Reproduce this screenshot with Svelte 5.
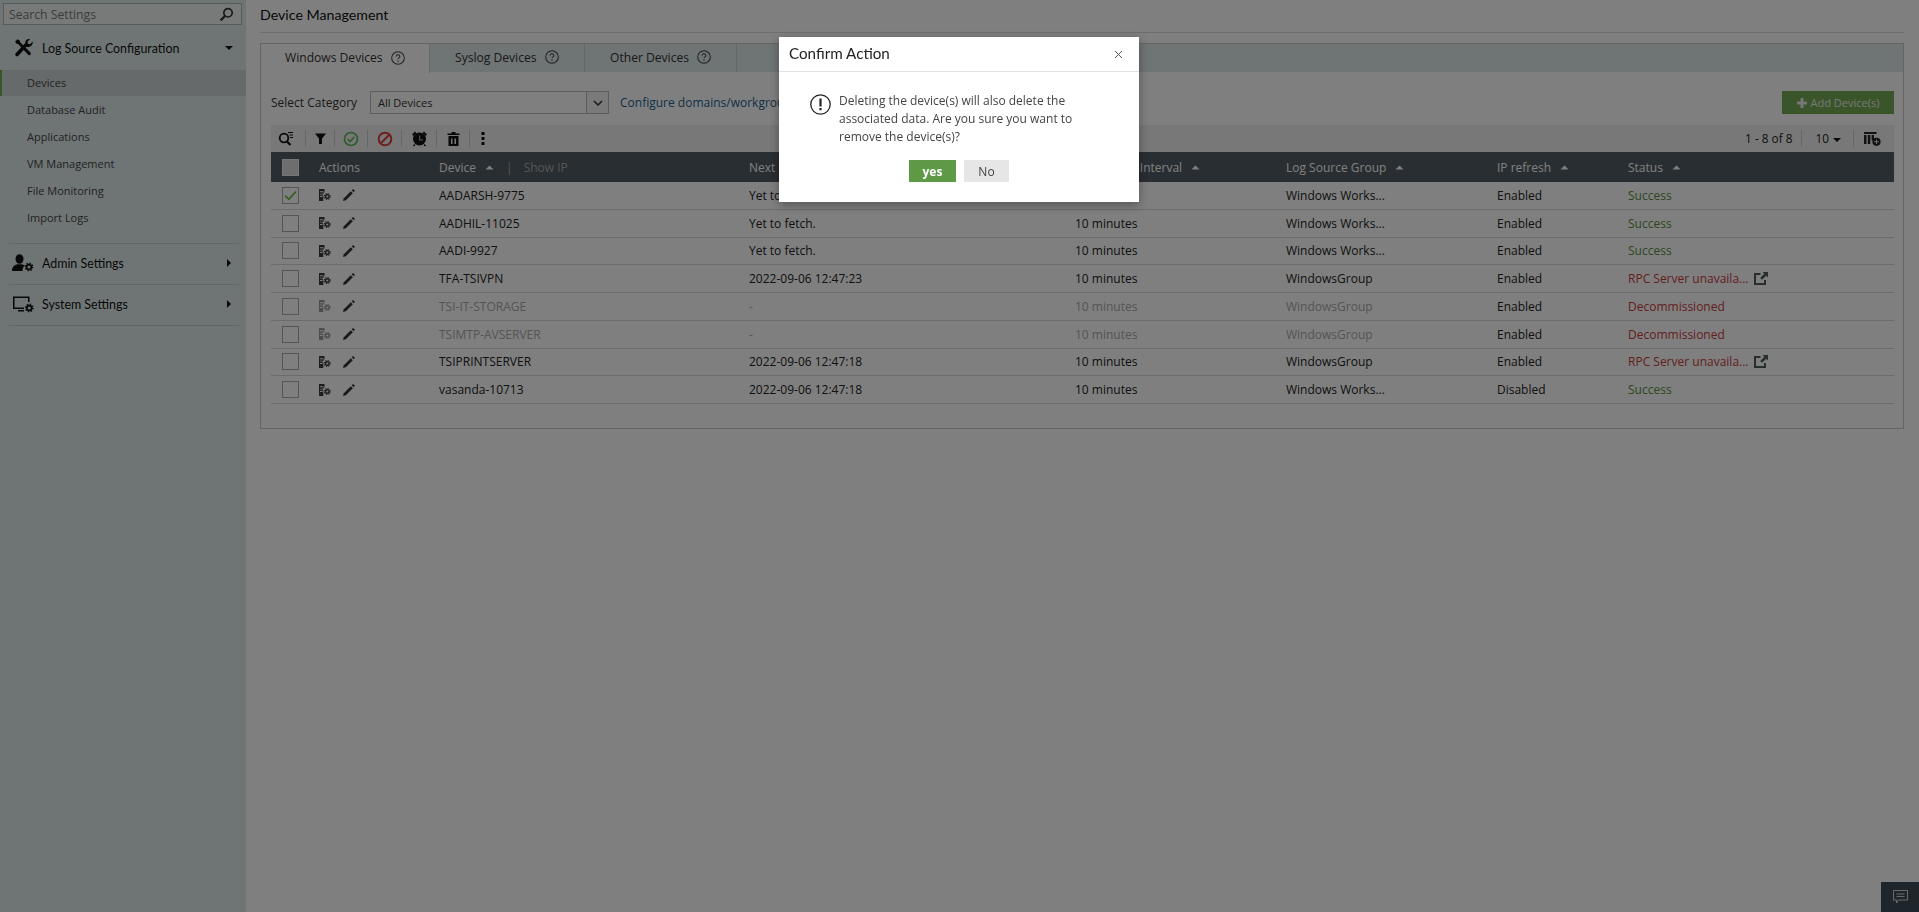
<script lang="ts">
  type Device = {
    name: string;
    next: string;
    group: string;
    refresh: string;
    status: string;
    checked?: boolean;
    off?: boolean;
    link?: boolean;
  };

  const menu = ['Devices', 'Database Audit', 'Applications', 'VM Management', 'File Monitoring', 'Import Logs'];

  const devices: Device[] = [
    { name: 'AADARSH-9775', next: 'Yet to fetch.', group: 'Windows Works...', refresh: 'Enabled', status: 'Success', checked: true },
    { name: 'AADHIL-11025', next: 'Yet to fetch.', group: 'Windows Works...', refresh: 'Enabled', status: 'Success' },
    { name: 'AADI-9927', next: 'Yet to fetch.', group: 'Windows Works...', refresh: 'Enabled', status: 'Success' },
    { name: 'TFA-TSIVPN', next: '2022-09-06 12:47:23', group: 'WindowsGroup', refresh: 'Enabled', status: 'RPC Server unavaila...', link: true },
    { name: 'TSI-IT-STORAGE', next: '-', group: 'WindowsGroup', refresh: 'Enabled', status: 'Decommissioned', off: true },
    { name: 'TSIMTP-AVSERVER', next: '-', group: 'WindowsGroup', refresh: 'Enabled', status: 'Decommissioned', off: true },
    { name: 'TSIPRINTSERVER', next: '2022-09-06 12:47:18', group: 'WindowsGroup', refresh: 'Enabled', status: 'RPC Server unavaila...', link: true },
    { name: 'vasanda-10713', next: '2022-09-06 12:47:18', group: 'Windows Works...', refresh: 'Disabled', status: 'Success' }
  ];

  const statusClass = (s: string) => (s === 'Success' ? 'ok' : 'bad');
</script>

{#snippet sortUp()}
  <svg class="sort" width="9" height="5" viewBox="0 0 9 5"><path d="M0.5 4.5 4.5 0.5 8.5 4.5z" fill="currentColor" /></svg>
{/snippet}

{#snippet help()}
  <svg class="help" width="14" height="14" viewBox="0 0 15 15" fill="none" stroke="#444" stroke-width="1.1">
    <circle cx="7.5" cy="7.5" r="6.8" />
    <path d="M5.5 6c0-1.3 1-2 2-2s2 .7 2 1.8c0 1.5-2 1.5-2 3" />
    <path d="M7.5 10.3v1.3" stroke-width="1.3" />
  </svg>
{/snippet}

{#snippet gear(cx: number, cy: number)}
  <circle {cx} {cy} r="2.4" fill="none" stroke="#111" stroke-width="1.8" />
  <circle {cx} {cy} r="3.7" fill="none" stroke="#111" stroke-width="1.4" stroke-dasharray="1.4 1.5" />
{/snippet}

<div class="page">
  <aside class="side">
    <div class="search">
      <span>Search Settings</span>
      <svg width="15" height="15" viewBox="0 0 15 15" fill="none" stroke="#333" stroke-width="1.7">
        <circle cx="9" cy="5.8" r="4.2" />
        <path d="M6 9 1.6 13.4" stroke-width="2.2" />
      </svg>
    </div>

    <div class="group open">
      <svg class="gicon" width="20" height="20" viewBox="0 0 20 20" fill="#111">
        <path d="M3.4 1.2 1.2 3.4l1 2.2 1.9.4 9.8 10.6a1.6 1.6 0 0 0 2.6-2.2L6.2 4.3 5.7 2.4z" />
        <path d="M18.8 3.4 16 6.2l-2-.4-.5-2 2.7-2.7C13.7.4 11 2 11.3 5L1.7 15.2a1.8 1.8 0 0 0 2.7 2.5L9.7 12l1.6-1.9 1.1-1.3c3 .8 6.7-1.2 6.4-5.4z" />
      </svg>
      <span>Log Source Configuration</span>
      <i class="caret down"></i>
    </div>
    <ul class="menu">
      {#each menu as item, i}
        <li class:active={i === 0}>{item}</li>
      {/each}
    </ul>

    <div class="group line">
      <svg class="gicon" width="22" height="18" viewBox="0 0 22 18" fill="#111">
        <ellipse cx="7.5" cy="5" rx="4" ry="4.8" />
        <path d="M0 17c0-4.5 2.5-6 5.5-6.800h4c1.300.3 2.500.8 3.300 1.500-1.800 1.300-2.600 3.300-2.100 5.300z" />
        {@render gear(17, 13)}
      </svg>
      <span>Admin Settings</span>
      <i class="caret right"></i>
    </div>

    <div class="group line">
      <svg class="gicon" width="22" height="18" viewBox="0 0 22 18" fill="#111">
        <path d="M1 1.500h16.500V7H16V3H2.500v9.500H12V14H1z" />
        <path d="M6 15h6v1.500H6z" />
        {@render gear(17.3, 13)}
      </svg>
      <span>System Settings</span>
      <i class="caret right"></i>
    </div>
  </aside>

  <main class="main">
    <h1>Device Management</h1>

    <section class="panel">
      <div class="tabs">
        <div class="tab current">Windows Devices {@render help()}</div>
        <div class="tab t2">Syslog Devices {@render help()}</div>
        <div class="tab t3">Other Devices {@render help()}</div>
      </div>

      <div class="body">
        <div class="filter">
          <span class="label">Select Category</span>
          <div class="select">
            <span>All Devices</span>
            <b>
              <svg width="10" height="6" viewBox="0 0 10 6" fill="none" stroke="#333" stroke-width="1.5"><path d="M1 1l4 4 4-4" /></svg>
            </b>
          </div>
          <a href="#domains">Configure domains/workgroups</a>
          <button class="add">
            <svg width="10" height="10" viewBox="0 0 10 10" fill="#eee"><path d="M3.5 0h3v3.500H10v3H6.500V10h-3V6.500H0v-3h3.500z" /></svg>
            Add Device(s)
          </button>
        </div>

        <div class="tools">
          <span class="tool first">
            <svg width="16" height="15" viewBox="0 0 16 15" fill="none" stroke="#111" stroke-width="1.8">
              <circle cx="6" cy="7" r="4.3" />
              <path d="M9 10.500l3.500 3.500" stroke-width="2.2" />
              <path d="M10 1.500h5M11.500 4h3.500M12 6.500h3" stroke-width="1" />
            </svg>
          </span>
          <span class="tool narrow">
            <svg width="11" height="11" viewBox="0 0 11 11" fill="#111"><path d="M0 .5h11L7 5.500V11H4V5.500z" /></svg>
          </span>
          <span class="tool ok-tool">
            <svg width="16" height="16" viewBox="0 0 16 16" fill="none" stroke="#5cb85c" stroke-width="1.7">
              <circle cx="8" cy="8" r="6.500" />
              <path d="M4.800 8.200l2.300 2.300 4.200-4.500" />
            </svg>
          </span>
          <span class="tool ban-tool">
            <svg width="16" height="16" viewBox="0 0 16 16" fill="none" stroke="#d9403f" stroke-width="2">
              <circle cx="8" cy="8" r="6.300" />
              <path d="M3.500 12.500l9-9" />
            </svg>
          </span>
          <span class="tool clock-tool">
            <svg width="17" height="17" viewBox="0 0 17 17" fill="#111">
              <circle cx="8.500" cy="9" r="6.500" />
              <path d="M1 4.500 4 1.500l1.500 1.500-3 3zM16 4.500l-3-3L11.500 3l3 3zM3.500 14l1 1-1.500 1.500-1-1zM13.500 14l-1 1 1.500 1.500 1-1z" />
              <path d="M8 5.500h1.200v3.700h2.800v1.200H8z" fill="#999" />
            </svg>
          </span>
          <span class="tool ok-tool">
            <svg width="13" height="14" viewBox="0 0 13 14" fill="#111">
              <path d="M4.500 0h4v1.500h4V3H.5V1.500h4z" />
              <path fill-rule="evenodd" d="M1.500 4h10v10h-10zm2.500 2.500V12h1.500V6.500zm3.500 0V12H9V6.500z" />
            </svg>
          </span>
          <span class="tool last">
            <svg width="4" height="13" viewBox="0 0 4 13" fill="#111"><path d="M.5 0h3v3h-3zM.5 5h3v3h-3zM.5 10h3v3h-3z" /></svg>
          </span>

          <div class="pager">
            <span class="count">1 - 8 of 8</span>
            <span class="size">10 <i class="caret down small"></i></span>
            <svg width="17" height="14" viewBox="0 0 17 14" fill="#222">
              <path d="M0 0h12.500v2H0zM0 3h2.500v9H0zM3.800 3h2.500v9H3.800zM7.600 3H10v5.500H7.600z" />
              <circle cx="12.500" cy="9.800" r="4.100" />
              <path d="M12 7.500h1v1.800h1.800v1H13v1.800h-1v-1.800h-1.800v-1H12z" fill="#ddd" />
            </svg>
          </div>
        </div>

        <div class="row head">
          <span class="check"><i class="box filled"></i></span>
          <span>Actions</span>
          <span>Device {@render sortUp()}<em>|</em><u>Show IP</u></span>
          <span>Next Fetch</span>
          <span>Monitoring Interval {@render sortUp()}</span>
          <span>Log Source Group {@render sortUp()}</span>
          <span>IP refresh {@render sortUp()}</span>
          <span>Status {@render sortUp()}</span>
        </div>

        {#each devices as d}
          <div class="row" class:off={d.off}>
            <span class="check">
              <i class="box">
                {#if d.checked}
                  <svg width="13" height="11" viewBox="0 0 13 11" fill="none" stroke="#63b53f" stroke-width="1.6"><path d="M1 5.500l3.800 3.800L12 1.500" /></svg>
                {/if}
              </i>
            </span>
            <span class="acts">
              <svg class="doc" width="12" height="12" viewBox="0 0 12 12" fill="#3a3a3a">
                <path fill-rule="evenodd" d="M0 0h5.500v3.300H4.600v1.400H3.800V7H4.300v5H0zM1 2.300v.9h3.400v-.9zm0 2.400v.9h2.500v-.9zm0 2.400v.9h2.500v-.9z" />
                <circle cx="8.300" cy="7.500" r="1.800" fill="none" stroke="#3a3a3a" stroke-width="1.400" />
                <circle cx="8.300" cy="7.500" r="3" fill="none" stroke="#3a3a3a" stroke-width="1.100" stroke-dasharray="1.200 1.160" />
              </svg>
              <svg class="pen" width="12" height="12" viewBox="0 0 12 12" fill="#333">
                <path d="M0 12l.8-2.800L7.800 2.200 9.800 4.200 2.800 11.200z" />
                <path d="M8.700 1.300 9.400.6a1 1 0 0 1 1.400 0l.6.600a1 1 0 0 1 0 1.400l-.7.700z" />
              </svg>
            </span>
            <span>{d.name}</span>
            <span>{d.next}</span>
            <span>10 minutes</span>
            <span>{d.group}</span>
            <span class="plain">{d.refresh}</span>
            <span class={statusClass(d.status)}>
              {d.status}
              {#if d.link}
                <svg class="ext" width="14" height="13" viewBox="0 0 14 13" fill="#505a60">
                  <path d="M0 1h6.500v2H2v8h8V8h2v5H0z" />
                  <path d="M8.500 0H14v5.500l-1.800-1.800L8 7.800 6.200 6l4.100-4.200z" />
                </svg>
              {/if}
            </span>
          </div>
        {/each}
      </div>
    </section>
  </main>
</div>

<button class="feedback" aria-label="Feedback">
  <svg width="15" height="14" viewBox="0 0 15 14" fill="none" stroke="#cfd4d6" stroke-width="1">
    <path d="M.5.500h14v9.500H5.500L3.500 13v-3h-3z" />
    <path d="M3.500 4h8M3.500 6.500h8" />
  </svg>
</button>

<div class="overlay">
  <div class="modal" role="dialog" aria-labelledby="confirm-title">
    <header>
      <h2 id="confirm-title">Confirm Action</h2>
      <svg class="close" width="9" height="9" viewBox="0 0 9 9" stroke="#555" stroke-width="1"><path d="M1 1l7 7M8 1l-7 7" /></svg>
    </header>
    <div class="message">
      <svg width="21" height="21" viewBox="0 0 21 21" fill="none" stroke="#222" stroke-width="1.3">
        <circle cx="10.500" cy="10.500" r="9.700" />
        <path d="M10.500 4.500v8" stroke-width="2.2" />
        <path d="M10.500 14v2.300" stroke-width="2.2" />
      </svg>
      <p>Deleting the device(s) will also delete the associated data. Are you sure you want to remove the device(s)?</p>
    </div>
    <div class="buttons">
      <button class="yes">yes</button>
      <button class="no">No</button>
    </div>
  </div>
</div>

<style>
  :global(body) { margin: 0; font-family: "Open Sans", "Liberation Sans", sans-serif; font-size: 12px; color: #333; background: #fff; overflow: hidden; }
  .page { display: flex; height: 912px; }

  .side { width: 246px; flex-shrink: 0; background: #dfebeb; box-sizing: border-box; }
  .search { display: flex; align-items: center; justify-content: space-between; box-sizing: border-box; margin: 3px 4px 0 3px; height: 22px; padding: 0 7px 0 5px; border: 1px solid #b0b6b6; background: #f0f4f4; color: #777; font-size: 12.2px; }
  .group { display: flex; align-items: center; height: 38px; padding: 0 0 2px 3px; margin: 0 7px 0 9px; font-family: Lato, "Open Sans", sans-serif; font-size: 12.4px; font-weight: 400; color: #111; border-top: 1px solid transparent; }
  .group span { margin-left: 8px; flex: 1; }
  .group.open { height: 44px; padding: 0 0 0 5px; }
  .group.open span { margin-left: 8px; }
  .group.line { border-top-color: #c4cccc; }
  .group.line:last-of-type { border-bottom: 1px solid #c4cccc; }
  .gicon { flex-shrink: 0; }
  .menu { list-style: none; margin: 0 0 11px; padding: 0; }
  .menu li { height: 27px; line-height: 26px; padding-left: 27px; color: #444; font-size: 11px; }
  .menu li.active { background: #ccd4d4; border-left: 2px solid #6fb048; padding-left: 25px; height: 26px; margin-bottom: 1px; }
  .caret { display: block; width: 0; height: 0; margin-right: 6px; border-style: solid; }
  .caret.down { border-width: 4px 4px 0; border-color: #111 transparent transparent; }
  .caret.right { border-width: 4px 0 4px 4px; border-color: transparent transparent transparent #111; margin-right: 8px; }
  .caret.small { display: inline-block; margin: 0 0 1px 1px; border-width: 4px 4px 0; }

  .main { flex: 1; padding: 0 15px 0 14px; min-width: 0; }
  h1 { margin: 0; height: 32px; line-height: 30px; font-family: Lato, "Open Sans", sans-serif; font-size: 14.2px; font-weight: 400; color: #111; border-bottom: 1px solid #ddd; }
  .panel { margin-top: 10px; height: 386px; box-sizing: border-box; border: 1px solid #c8c8c8; }
  .tabs { display: flex; height: 28px; background: #dfe9e9; }
  .tab { display: flex; align-items: center; gap: 8px; padding: 0 0 2px 24px; width: 169px; box-sizing: border-box; border-right: 1px solid #c8d0d0; color: #333; font-size: 12.1px; }
  .tab.current { background: #fff; height: 29px; }
  .tab.t2 { width: 155px; padding-left: 25px; }
  .tab.t3 { width: 152px; padding-left: 25px; }
  .body { padding: 0 9px 0 10px; }

  .filter { display: flex; align-items: center; height: 53px; padding-top: 8px; box-sizing: border-box; }
  .label { width: 99px; }
  .select { display: flex; width: 239px; height: 23px; box-sizing: border-box; border: 1px solid #bbb; background: #fff; align-items: center; justify-content: space-between; }
  .select span { padding-left: 7px; font-size: 11px; }
  .select b { display: flex; align-items: center; justify-content: center; width: 21px; height: 100%; border-left: 1px solid #bbb; background: #f4f4f4; }
  .filter a { margin-left: 11px; color: #1f5f8b; text-decoration: none; font-size: 12px; }
  .add { margin-left: auto; display: flex; align-items: center; justify-content: center; gap: 4px; width: 112px; height: 23px; padding: 0; border: 0; background: #74ab52; color: #eee; font: 11px "Open Sans", sans-serif; }

  .tools { display: flex; align-items: center; height: 27px; background: #f0f0f0; }
  .tool { display: flex; align-items: center; justify-content: center; height: 17px; width: 33px; box-sizing: border-box; border-right: 1px solid #ccc; }
  .tool.first { width: 35px; justify-content: flex-start; padding-left: 7px; }
  .tool.narrow { width: 29px; }
  .tool.ok-tool { width: 33px; }
  .tool.ban-tool { width: 34px; }
  .tool.clock-tool { width: 35px; }
  .tool.last { border: 0; width: 26px; }
  .pager { margin-left: auto; display: flex; align-items: center; padding-right: 13px; color: #222; font-size: 11.8px; }
  .pager .count { padding-right: 9px; border-right: 1px solid #ccc; line-height: 17px; }
  .pager .size { padding: 0 12px 0 13px; border-right: 1px solid #ccc; line-height: 17px; margin-right: 10px; }

  .row { display: grid; grid-template-columns: 48px 120px 310px 326px 211px 211px 131px 1fr; align-items: center; height: 27.75px; border-bottom: 1px solid #d8d8d8; box-sizing: border-box; font-size: 12px; color: #222; white-space: nowrap; overflow: hidden; }
  .row.head { height: 30px; background: #525c64; color: #fff; border: 0; }
  .row.off > span { color: #aaa; }
  .row.off .acts .doc { opacity: .5; }
  .row.off .plain { color: #222 !important; }
  .row .ok { color: #5a8f3e !important; }
  .row .bad { color: #c93c3c !important; }
  .check { padding-left: 11px; display: flex; }
  .box { display: flex; align-items: center; justify-content: center; width: 15px; height: 15px; border: 1px solid #aaa; background: #fff; }
  .box.filled { background: #ddd; border-color: #eee; }
  .acts { display: flex; align-items: center; gap: 12px; }
  .sort { margin-left: 6px; vertical-align: 2px; color: #fff; }
  .head em { font-style: normal; margin: 0 11px 0 12px; color: #aaa; }
  .head u { text-decoration: none; color: #aaa; }
  .ext { margin-left: 2px; vertical-align: -2px; }

  .feedback { position: fixed; right: 0; bottom: 0; width: 38px; height: 30px; border: 0; padding: 0; display: flex; align-items: center; justify-content: center; background: #3f4d56; z-index: 1; }

  .overlay { position: fixed; inset: 0; z-index: 2; background: rgba(0, 0, 0, .5); }
  .modal { position: absolute; left: 779px; top: 37px; width: 360px; height: 165px; background: #fff; box-shadow: 0 3px 10px rgba(0, 0, 0, .35); }
  .modal header { display: flex; align-items: center; justify-content: space-between; height: 32px; padding: 0 16px 2px 10px; border-bottom: 1px solid #e2e2e2; }
  .modal h2 { margin: 0; font-family: Lato, "Open Sans", sans-serif; font-size: 15.2px; font-weight: 400; color: #222; }
  .close { margin-top: 3px; }
  .message { display: flex; gap: 8px; padding: 20px 40px 0 31px; }
  .message svg { flex-shrink: 0; margin-top: 2px; }
  .message p { margin: 0; font-size: 12px; line-height: 18px; color: #444; }
  .buttons { display: flex; justify-content: center; gap: 8px; margin-top: 14px; }
  .buttons button { height: 22px; border: 0; padding: 0; font: 12px "Open Sans", sans-serif; }
  .yes { width: 47px; background: #5e9a46; color: #fff; font-weight: 700 !important; }
  .no { width: 45px; background: #e6e6e6; color: #444; }
</style>
